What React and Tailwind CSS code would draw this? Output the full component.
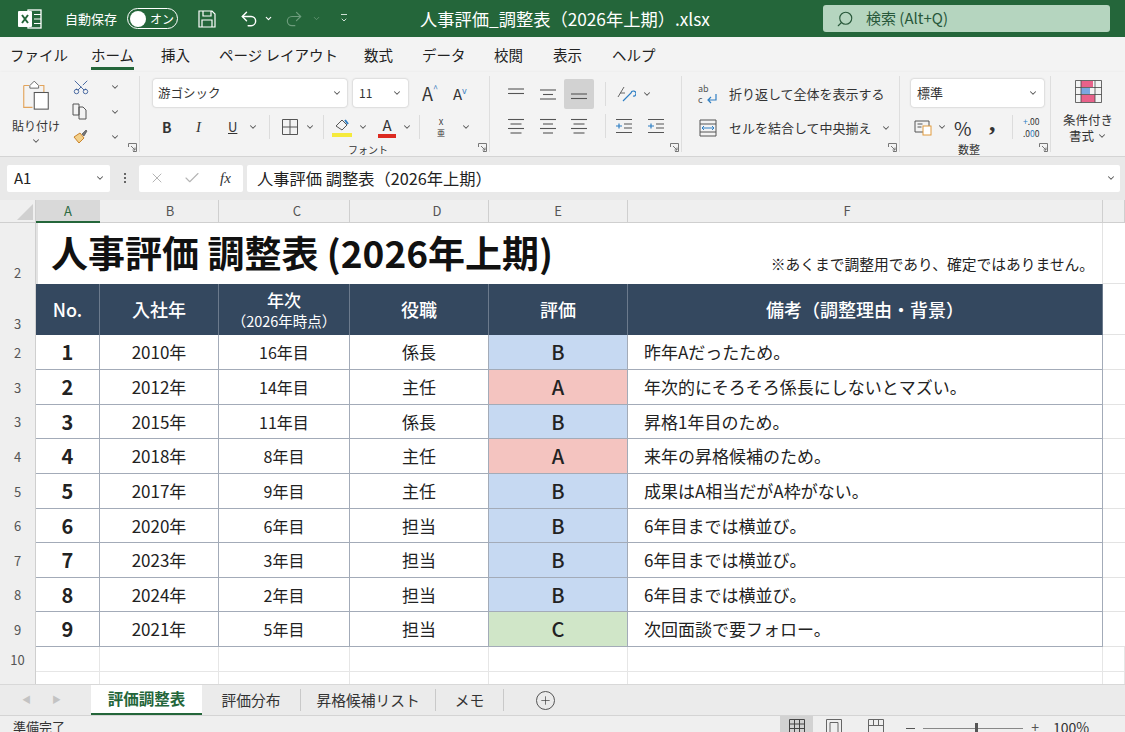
import React from 'react';
import { ChevronDown, Scissors, Search, X, Check, Undo2, Redo2, Plus } from 'lucide-react';

const font = "font-['Noto_Sans_CJK_JP',sans-serif]";

const rows = [
  { label: '2', no: '1', year: '2010年', age: '16年目', role: '係長', grade: 'B', note: '昨年Aだったため。' },
  { label: '3', no: '2', year: '2012年', age: '14年目', role: '主任', grade: 'A', note: '年次的にそろそろ係長にしないとマズい。' },
  { label: '3', no: '3', year: '2015年', age: '11年目', role: '係長', grade: 'B', note: '昇格1年目のため。' },
  { label: '4', no: '4', year: '2018年', age: '8年目', role: '主任', grade: 'A', note: '来年の昇格候補のため。' },
  { label: '5', no: '5', year: '2017年', age: '9年目', role: '主任', grade: 'B', note: '成果はA相当だがA枠がない。' },
  { label: '6', no: '6', year: '2020年', age: '6年目', role: '担当', grade: 'B', note: '6年目までは横並び。' },
  { label: '7', no: '7', year: '2023年', age: '3年目', role: '担当', grade: 'B', note: '6年目までは横並び。' },
  { label: '8', no: '8', year: '2024年', age: '2年目', role: '担当', grade: 'B', note: '6年目までは横並び。' },
  { label: '9', no: '9', year: '2021年', age: '5年目', role: '担当', grade: 'C', note: '次回面談で要フォロー。' },
];

const gradeBg = { A: 'bg-[#f4c4c0]', B: 'bg-[#c6d9f2]', C: 'bg-[#d0e6c8]' };

const Chev = ({ className = 'text-[#555]' }) => <ChevronDown size={10} strokeWidth={2.5} className={`shrink-0 ${className}`} />;

const Launcher = () => (
  <svg width="9" height="9" viewBox="0 0 9 9" className="absolute right-[2px] bottom-[0px]" fill="none" stroke="#777" strokeWidth="1">
    <path d="M.5 4V.5H8.5V8.500H5M3 3l4 4M7 4.500V7H4.500" />
  </svg>
);

const Sep = () => <div className="w-px h-[24px] bg-[#dcdcdc] shrink-0" />;

const Lines = ({ widths, y }) => (
  <svg width="18" height="18" viewBox="0 0 18 18" stroke="#555" strokeWidth="1.1" className="shrink-0">
    {widths.map((w, i) => <line key={i} x1={(18 - w) / 2} x2={(18 + w) / 2} y1={y + i * 4.5} y2={y + i * 4.5} />)}
  </svg>
);

const Indent = () => (
  <svg width="18" height="18" viewBox="0 0 18 18" fill="none" className="shrink-0">
    <path d="M1 2.500h16M1 15.500h16M9 7h8M9 11h8" stroke="#555" strokeWidth="1.1" />
    <path d="M1 9h6M4 6.500v5" stroke="#2f7fc4" strokeWidth="1.2" />
  </svg>
);

function TitleBar() {
  return (
    <div className="relative h-[37px] bg-[#24663a] flex items-center text-white shrink-0">
      <svg width="24" height="20" viewBox="0 0 24 20" className="ml-[18px] shrink-0">
        <rect x="10" y="1" width="13" height="18" fill="none" stroke="#fff" strokeWidth="1.3" />
        <path d="M16 5.500h7M16 10h7M16 14.500h7" stroke="#fff" strokeWidth="1.2" />
        <rect x="0" y="2" width="14" height="16" rx="1" fill="#fff" />
        <path d="M4 6l6 8M10 6l-6 8" stroke="#24663a" strokeWidth="2" />
      </svg>
      <span className="ml-[23px] text-[13px] w-[62px] shrink-0 whitespace-nowrap">自動保存</span>
      <div className="w-[51px] h-[21px] rounded-full border border-white flex items-center pl-[2px] gap-[4px] shrink-0">
        <div className="w-[16px] h-[16px] rounded-full bg-white" />
        <span className="text-[12px] leading-none">オン</span>
      </div>
      <svg width="20" height="20" viewBox="0 0 20 20" fill="none" stroke="#fff" strokeWidth="1.200" className="ml-[19px] shrink-0">
        <path d="M2 2h13l3 3v13H2zM6 2v5h8V2M5 18v-7h10v7" />
      </svg>
      <Undo2 size={20} strokeWidth={1.7} className="ml-[22px] shrink-0" />
      <ChevronDown size={9} strokeWidth={3} className="ml-[5px]" />
      <Redo2 size={20} strokeWidth={1.4} className="ml-[11px] text-[#6d9c7c] shrink-0" />
      <ChevronDown size={9} strokeWidth={2} className="ml-[8px] text-[#6d9c7c]" />
      <div className="ml-[19px] flex flex-col items-center text-[#cfe0d4]">
        <div className="w-[6px] h-px bg-current mb-px" />
        <ChevronDown size={8} strokeWidth={3} />
      </div>
      <span className="ml-[72px] text-[17.25px] whitespace-nowrap w-[288px]">人事評価_調整表（2026年上期）.xlsx</span>
      <div className="ml-[115px] w-[287px] h-[27px] bg-[#b5d5bf] rounded-[3px] flex items-center pl-[13px] text-[#28583a] shrink-0">
        <Search size={18} strokeWidth={1.5} className="-scale-x-100" />
        <span className="ml-[12px] text-[15px]">検索 (Alt+Q)</span>
      </div>
    </div>
  );
}

function MenuBar() {
  const items = [
    ['ファイル', 'w-[91px] pl-[10px]'],
    ['ホーム', 'w-[70px]'],
    ['挿入', 'w-[58px]'],
    ['ページ レイアウト', 'w-[145px]'],
    ['数式', 'w-[58px]'],
    ['データ', 'w-[72px]'],
    ['校閲', 'w-[59px]'],
    ['表示', 'w-[59px]'],
    ['ヘルプ', 'w-[60px]'],
  ];
  return (
    <div className="h-[35px] bg-[#f3f3f3] flex items-center text-[14.5px] text-[#222] shrink-0">
      {items.map(([t, w], i) => (
        <div key={t} className={`relative h-full flex items-center whitespace-nowrap shrink-0 ${w}`}>
          {t}
          {i === 1 && <div className="absolute left-0 bottom-[2px] w-[43px] h-[3px] bg-[#24663a]" />}
        </div>
      ))}
    </div>
  );
}

function Ribbon() {
  return (
    <div className="h-[85px] bg-[#f3f3f3] flex border-b border-[#d4d4d4] shadow-sm text-[#333] shrink-0 overflow-hidden">
      {/* クリップボード */}
      <div className="relative w-[140px] flex shrink-0 border-r border-[#dedede] my-[4px]">
        <div className="w-[72px] flex flex-col items-center">
          <svg width="28" height="36" viewBox="0 0 32 38" fill="none" className="mt-[2px] shrink-0">
            <path d="M2 7h6M20 7h5v8M2 7v25h10" stroke="#e2a45c" strokeWidth="1.300" />
            <path d="M9 7l5-5 5 5v3H9z" stroke="#666" strokeWidth="1.100" fill="#fff" />
            <rect x="14" y="15" width="16" height="19" fill="#fff" stroke="#555" strokeWidth="1.200" />
          </svg>
          <span className="text-[12px] leading-none mt-[6px] whitespace-nowrap">貼り付け</span>
          <Chev className="text-[#555] mt-[4px]" />
        </div>
        <div className="flex flex-col gap-[6px] pt-[1px]">
          <div className="flex items-center w-[48px] h-[19px] justify-between">
            <Scissors size={18} strokeWidth={1.2} className="text-[#3a5c9a] -rotate-90" />
            <Chev />
          </div>
          <div className="flex items-center w-[48px] h-[19px] justify-between">
            <svg width="17" height="17" viewBox="0 0 17 17" fill="none" stroke="#555"><path d="M1 1h6v11H1zM7 4h4l3 3v9H7z" /></svg>
            <Chev />
          </div>
          <div className="flex items-center w-[48px] h-[19px] justify-between">
            <svg width="17" height="17" viewBox="0 0 17 17" fill="none"><path d="M2 9l6-4 4 5-5 5z" fill="#f3d08a" stroke="#c9832c" /><path d="M10 6l4-4 1 1-3 5z" fill="#777" stroke="#444" strokeWidth=".6" /></svg>
            <Chev />
          </div>
        </div>
        <Launcher />
      </div>

      {/* フォント */}
      <div className="relative w-[350px] shrink-0 border-r border-[#dedede] my-[4px] pl-[13px] pt-[3px]">
        <div className="flex items-center">
          <div className="w-[194px] h-[28px] bg-white rounded-[3px] shadow-[0_0_2px_#aaa] flex items-center justify-between px-[5px] text-[12.5px]">
            <span>游ゴシック</span><Chev />
          </div>
          <div className="ml-[6px] w-[55px] h-[28px] bg-white rounded-[3px] shadow-[0_0_2px_#aaa] flex items-center justify-between px-[6px] text-[12px]">
            <span>11</span><Chev />
          </div>
          <span className="ml-[14px] text-[18px] leading-none">A<span className="text-[9px] align-top text-[#3d7fc0]">^</span></span>
          <span className="ml-[15px] text-[15px] leading-none">A<span className="text-[9px] align-top text-[#3d7fc0]">v</span></span>
        </div>
        <div className="flex items-center mt-[7px] h-[26px]">
          <span className="ml-[9px] w-[34px] font-bold text-[14px]">B</span>
          <span className="w-[32px] text-[15px] italic font-['Liberation_Serif',serif]">I</span>
          <span className="w-[20px] text-[13px] underline">U</span>
          <Chev />
          <div className="mx-[11px]"><Sep /></div>
          <svg width="18" height="18" viewBox="0 0 18 18" fill="none" stroke="#555" className="shrink-0"><path d="M1.500 1.500h15v15h-15zM9 1.500v15M1.500 9h15" /></svg>
          <span className="ml-[6px]"><Chev /></span>
          <div className="mx-[8px]"><Sep /></div>
          <svg width="20" height="22" viewBox="0 0 20 22" fill="none" className="shrink-0">
            <path d="M4 10l6-6 5 5-5 5z" stroke="#555" />
            <path d="M13 4l3 4" stroke="#2f7fc4" strokeWidth="2" />
            <rect x="0" y="17" width="20" height="4" fill="#f5ea3c" />
          </svg>
          <span className="ml-[6px]"><Chev /></span>
          <div className="relative ml-[10px] w-[18px] h-[22px] text-center text-[15px] leading-[17px]">
            A
            <div className="absolute left-0 bottom-0 w-[18px] h-[4px] bg-[#dc2a20]" />
          </div>
          <span className="ml-[6px]"><Chev /></span>
          <div className="mx-[7px]"><Sep /></div>
          <span className="ml-[3px] w-[22px] flex flex-col items-center text-[8px] leading-[11px]">
            <span>X</span><span>亜</span>
          </span>
          <span className="ml-[9px]"><Chev /></span>
        </div>
        <div className="absolute bottom-[-3px] left-[208px] text-[10px] leading-none">フォント</div>
        <Launcher />
      </div>

      {/* 配置 */}
      <div className="relative w-[192px] shrink-0 border-r border-[#dedede] my-[4px] pl-[10px] pt-[3px]">
        <div className="flex items-center h-[30px]">
          <div className="w-[32px] flex justify-center"><Lines widths={[16, 16]} y={4} /></div>
          <div className="w-[32px] flex justify-center"><Lines widths={[16, 10, 16]} y={5} /></div>
          <div className="w-[30px] h-[30px] bg-[#d2d2d2] rounded-[2px] flex items-center justify-center"><Lines widths={[16, 16]} y={9} /></div>
          <div className="ml-[11px]"><Sep /></div>
          <svg width="20" height="20" viewBox="0 0 20 20" fill="none" className="ml-[10px] shrink-0">
            <path d="M2 13L8 3M4 9h5" stroke="#666" /><path d="M7 17l8-8a2.500 2.500 0 1 1 2 3" stroke="#2f7fc4" strokeWidth="1.200" />
          </svg>
          <span className="ml-[6px]"><Chev /></span>
        </div>
        <div className="flex items-center h-[26px] mt-[4px]">
          <div className="w-[32px] flex justify-center"><Lines widths={[16, 11, 16, 11]} y={2.5} /></div>
          <div className="w-[32px] flex justify-center"><Lines widths={[16, 10, 16, 10]} y={2.5} /></div>
          <div className="w-[30px] flex justify-center"><Lines widths={[16, 11, 16, 11]} y={2.5} /></div>
          <div className="ml-[11px]"><Sep /></div>
          <div className="ml-[9px] flex gap-[14px]"><Indent /><Indent /></div>
        </div>
        <Launcher />
      </div>

      {/* 折り返し */}
      <div className="relative w-[218px] shrink-0 border-r border-[#dedede] my-[4px] pl-[16px] pt-[6px] text-[13px]">
        <div className="flex items-center h-[24px]">
          <div className="relative w-[20px] h-[22px] shrink-0 text-[9px] leading-[11px] text-[#555]">
            <span className="block">ab</span>
            <span className="block">c</span>
            <svg width="12" height="12" viewBox="0 0 12 12" fill="none" className="absolute right-0 bottom-0">
              <path d="M10 1v6H3M5 4L2 7l3 3" stroke="#2f7fc4" strokeWidth="1.200" />
            </svg>
          </div>
          <span className="ml-[11px] whitespace-nowrap">折り返して全体を表示する</span>
        </div>
        <div className="flex items-center h-[24px] mt-[10px]">
          <svg width="20" height="20" viewBox="0 0 20 20" fill="none" className="shrink-0">
            <path d="M2 2h16v16H2zM2 6h16M2 14h16" stroke="#555" />
            <path d="M4 10h12M6 8l-2 2 2 2M14 8l2 2-2 2" stroke="#2f7fc4" />
          </svg>
          <span className="ml-[11px] whitespace-nowrap">セルを結合して中央揃え</span>
          <span className="ml-[9px]"><Chev /></span>
        </div>
        <Launcher />
      </div>

      {/* 数値 */}
      <div className="relative w-[151px] shrink-0 border-r border-[#dedede] my-[4px] pl-[11px] pt-[3px]">
        <div className="w-[133px] h-[28px] bg-white rounded-[3px] shadow-[0_0_2px_#aaa] flex items-center justify-between px-[6px] text-[13px]">
          <span>標準</span><Chev />
        </div>
        <div className="flex items-center h-[26px] mt-[7px] ml-[3px]">
          <svg width="18" height="18" viewBox="0 0 18 18" fill="none" className="shrink-0">
            <path d="M1 3h14v11H1zM3.500 6h5M3.500 9h4" stroke="#555" />
            <rect x="9" y="8" width="8" height="9" fill="#fff" stroke="#e09a3c" />
          </svg>
          <span className="ml-[5px]"><Chev /></span>
          <span className="ml-[7px] text-[19px] leading-none w-[27px]">%</span>
          <span className="ml-[8px] w-[23px] text-[26px] font-bold leading-none -mt-[8px] font-['Liberation_Serif',serif]">,</span>
          <Sep />
          <span className="ml-[10px] text-[8.5px] leading-[12px] text-center">
            <span className="text-[#2f7fc4]">+</span>.00<br />.0<span className="text-[#2f7fc4]">0</span>0
          </span>
        </div>
        <div className="absolute bottom-[-3px] left-[58px] text-[11px] leading-none">数整</div>
        <Launcher />
      </div>

      {/* スタイル */}
      <div className="w-[74px] shrink-0 flex flex-col items-center pt-[8px] text-[12.5px] leading-[16px] whitespace-nowrap">
        <svg width="27" height="23" viewBox="0 0 27 23" fill="none" className="shrink-0 mb-[9px]">
          <rect x="6" y="1" width="12" height="6" fill="#e8628a" />
          <rect x="6" y="8" width="9" height="6" fill="#7aa7e0" />
          <rect x="6" y="15" width="14" height="7" fill="#e8628a" />
          <path d="M.500.5h26v22H.5zM.5 7.500h26M.5 14.500h26M6 .5v22M20 .5v22" stroke="#444" strokeWidth=".8" />
        </svg>
        <span>条件付き</span>
        <span className="flex items-center gap-[3px]">書式<Chev /></span>
      </div>
    </div>
  );
}

function FormulaBar() {
  return (
    <div className="h-[43px] bg-[#e9e9e9] flex items-center pl-[7px] pr-[5px] pb-[1px] text-[#222] shrink-0">
      <div className="w-[103px] h-[27px] bg-white rounded-[2px] flex items-center justify-between pl-[7px] pr-[5px] text-[15px]">
        A1<Chev />
      </div>
      <div className="w-[29px] flex flex-col items-center gap-[2px] shrink-0">
        <div className="w-[2px] h-[2px] bg-[#666]" /><div className="w-[2px] h-[2px] bg-[#666]" /><div className="w-[2px] h-[2px] bg-[#666]" />
      </div>
      <div className="w-[104px] h-[27px] bg-white rounded-[2px] flex items-center pl-[10px] gap-[18px] shrink-0">
        <X size={16} strokeWidth={1.5} className="text-[#b5b5b5]" />
        <Check size={18} strokeWidth={1.5} className="text-[#b5b5b5]" />
        <span className="ml-[1px] italic font-['Liberation_Serif',serif] text-[15px] text-[#333]">fx</span>
      </div>
      <div className="ml-[4px] flex-1 h-[27px] bg-white rounded-[2px] flex items-center justify-between pl-[10px] pr-[4px] text-[16.25px]">
        <span>人事評価 調整表（2026年上期）</span><Chev />
      </div>
    </div>
  );
}

const cell = 'flex items-center justify-center border-r border-b border-[#a3abb8] text-[#222]';
const rowHead = 'flex items-center justify-center bg-[#efefef] border-r border-[#cfcfcf] text-[13px] text-[#555]';
const colHead = 'flex items-center bg-[#efefef] border-r border-b border-[#cfcfcf] text-[13px] text-[#555]';
const headCell = 'flex items-center justify-center bg-[#34485f] border-r border-[#6b7a8c] text-white font-medium text-[18px]';

function Sheet() {
  return (
    <div className="h-[484px] overflow-hidden shrink-0 grid grid-cols-[36px_64px_119px_131px_139px_139px_475px_22px] grid-rows-[23px_61px_51px_35px_35px_34px_35px_35px_34px_35px_34px_35px_25px_25px]">
      {/* 列見出し */}
      <div className={`${colHead} justify-end items-end pr-[2px] pb-[2px]`}>
        <svg width="16" height="16" viewBox="0 0 16 16"><path d="M16 0v16H0z" fill="#d0d0d0" /></svg>
      </div>
      <div className="flex items-center justify-center bg-[#d9d9d9] text-[13px] text-[#2d6a41] border-b-2 border-[#24663a]">A</div>
      <div className={`${colHead} justify-center pl-[22px]`}>B</div>
      <div className={`${colHead} justify-center pl-[26px]`}>C</div>
      <div className={`${colHead} justify-center pl-[36px]`}>D</div>
      <div className={`${colHead} justify-center`}>E</div>
      <div className={`${colHead} justify-center pr-[36px]`}>F</div>
      <div className={colHead} />

      {/* タイトル行 */}
      <div className={`${rowHead} items-end pb-[2px]`}>2</div>
      <div className="col-span-6 flex items-center justify-between bg-white border-l-2 border-[#24663a] border-r border-[#e3e3e3] pl-[13px] pr-[8px]">
        <span className="text-[37px] font-bold text-[#111] whitespace-nowrap leading-none -mt-[3px]">人事評価 調整表 (2026年上期)</span>
        <span className="text-[14.75px] text-[#222] whitespace-nowrap self-end mb-[9px]">※あくまで調整用であり、確定ではありません。</span>
      </div>
      <div className="bg-white border-b border-[#e3e3e3]" />

      {/* ヘッダー行 */}
      <div className={`${rowHead} items-end pb-[2px]`}>3</div>
      <div className={headCell}>No.</div>
      <div className={headCell}>入社年</div>
      <div className={`${headCell} flex-col leading-[21px]`}>
        <span className="text-[17px]">年次</span>
        <span className="text-[14.5px] font-normal">（2026年時点）</span>
      </div>
      <div className={headCell}>役職</div>
      <div className={headCell}>評価</div>
      <div className={`${headCell} text-[17px]`}>備考（調整理由・背景）</div>
      <div className="bg-white border-b border-[#e3e3e3]" />

      {/* データ行 */}
      {rows.map((r) => (
        <React.Fragment key={r.no}>
          <div className={rowHead}>{r.label}</div>
          <div className={`${cell} bg-white text-[20px] font-bold`}>{r.no}</div>
          <div className={`${cell} bg-white text-[17px]`}>{r.year}</div>
          <div className={`${cell} bg-white text-[16px]`}>{r.age}</div>
          <div className={`${cell} bg-white text-[17px]`}>{r.role}</div>
          <div className={`${cell} ${gradeBg[r.grade]} text-[20px] font-medium text-[#111]`}>{r.grade}</div>
          <div className={`${cell} bg-white justify-start pl-[16px] text-[17px]`}>{r.note}</div>
          <div className="bg-white border-b border-[#e3e3e3]" />
        </React.Fragment>
      ))}

      {/* 空行 */}
      <div className={rowHead}>10</div>
      {[0, 1, 2, 3, 4, 5, 6].map((i) => <div key={i} className="bg-white border-r border-b border-[#e6e6e6]" />)}
      <div className={rowHead} />
      {[0, 1, 2, 3, 4, 5, 6].map((i) => <div key={i} className="bg-white border-r border-[#e6e6e6]" />)}
    </div>
  );
}

function SheetTabs() {
  return (
    <div className="h-[31px] bg-[#ebebeb] border-t border-[#d8d8d8] flex items-stretch text-[14.75px] text-[#333] shrink-0">
      <div className="w-[91px] flex items-center pl-[22px] gap-[21px] text-[#c3c3c3] text-[9px]">
        <span>◀</span><span>▶</span>
      </div>
      <div className="w-[111px] bg-white border-b-2 border-[#24663a] flex items-center justify-center font-bold text-[15.5px] text-[#24663a]">評価調整表</div>
      <div className="w-[98px] flex items-center justify-center"><span>評価分布</span></div>
      <div className="w-px my-[4px] bg-[#c9c9c9]" />
      <div className="w-[134px] flex items-center justify-center"><span>昇格候補リスト</span></div>
      <div className="w-px my-[4px] bg-[#c9c9c9]" />
      <div className="w-[67px] flex items-center justify-center"><span>メモ</span></div>
      <div className="w-px my-[4px] bg-[#c9c9c9]" />
      <div className="ml-[32px] flex items-center">
        <div className="w-[19px] h-[19px] rounded-full border border-[#555] flex items-center justify-center">
          <Plus size={13} strokeWidth={1.2} />
        </div>
      </div>
    </div>
  );
}

function StatusBar() {
  return (
    <div className="h-[17px] bg-[#efefef] border-t border-[#d4d4d4] flex items-start text-[13px] text-[#333] overflow-hidden shrink-0">
      <span className="ml-[13px] leading-[22px]">準備完了</span>
      <div className="ml-auto flex items-start">
        <div className="w-[33px] h-[17px] bg-[#d2d2d2] flex justify-center pt-[3px]">
          <svg width="16" height="14" viewBox="0 0 16 14" fill="none" stroke="#444"><path d="M.5.5h15v13H.5zM.5 5h15M.5 9.500h15M5.500.5v13M10.500.5v13" /></svg>
        </div>
        <div className="w-[42px] flex justify-center pt-[3px]">
          <svg width="16" height="14" viewBox="0 0 16 14" fill="none" stroke="#666"><path d="M.5.5h15v13H.5zM4 3.500h8v10H4z" /></svg>
        </div>
        <div className="w-[41px] flex justify-center pt-[3px]">
          <svg width="16" height="14" viewBox="0 0 16 14" fill="none" stroke="#666"><path d="M.5.500h15v13H.5zM5.500.5v6M10.500.5v6M.5 6.500h15" /></svg>
        </div>
        <div className="ml-[10px] w-[9px] h-px bg-[#555] mt-[12px]" />
        <div className="relative ml-[8px] w-[100px] h-px bg-[#888] mt-[12px]">
          <div className="absolute left-[52px] -top-[5px] w-[3px] h-[11px] bg-[#555]" />
        </div>
        <span className="ml-[8px] text-[14px] leading-[22px] text-[#555]">+</span>
        <span className="ml-[14px] mr-[33px] text-[14px] leading-[22px] w-[39px]">100%</span>
      </div>
    </div>
  );
}

export default function App() {
  return (
    <div className={`${font} w-[1125px] h-[732px] overflow-hidden flex flex-col bg-[#efefef]`}>
      <TitleBar />
      <MenuBar />
      <Ribbon />
      <FormulaBar />
      <Sheet />
      <SheetTabs />
      <StatusBar />
    </div>
  );
}
